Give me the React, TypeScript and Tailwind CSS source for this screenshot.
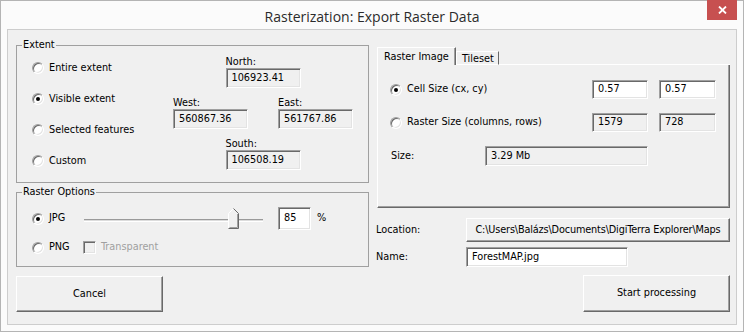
import React from "react";

const sunken =
  "border border-t-[#a0a0a0] border-l-[#a0a0a0] border-b-white border-r-white shadow-[inset_1px_1px_0_#696969,inset_-1px_-1px_0_#e3e3e3]";
const raised =
  "border border-t-white border-l-white border-b-[#696969] border-r-[#696969] shadow-[inset_-1px_-1px_0_#a0a0a0]";

function Radio({ checked }: { checked?: boolean }) {
  return (
    <span
      className={`flex h-3 w-3 shrink-0 items-center justify-center rounded-full bg-white ${sunken}`}
    >
      {checked && <span className="h-1 w-1 rounded-full bg-black" />}
    </span>
  );
}

function Box({ value, className }: { value: string; className: string }) {
  return (
    <div className={`flex shrink-0 items-center pl-[5px] ${sunken} ${className}`}>
      {value}
    </div>
  );
}

function Coord({ label, value }: { label: string; value: string }) {
  return (
    <div className="flex w-[75px] flex-col">
      <span className="h-[12px] leading-[12px]">{label}</span>
      <Box value={value} className="h-[20px] bg-[#f0f0f0]" />
    </div>
  );
}

function Slider() {
  return (
    <div className="relative flex h-[23px] w-[179px] shrink-0 items-center">
      <div className="mt-[3px] h-[3px] w-full border-t border-b border-t-[#9a9a9a] border-b-white bg-[#dcdcdc]" />
      <svg
        className="absolute left-[144px] top-[1px]"
        width="11"
        height="21"
        viewBox="0 0 11 21"
      >
        <path d="M0.5 20.5V5.5L5.5 0.5L10.5 5.5V20.5Z" fill="#f0f0f0" />
        <path d="M0.5 20V5.5L5.5 0.5" stroke="#ffffff" fill="none" />
        <path d="M5.5 0.5L10.5 5.5V20.5H0.5" stroke="#696969" fill="none" />
        <path d="M9.5 6V19.5H1.5" stroke="#a0a0a0" fill="none" />
      </svg>
    </div>
  );
}

export default function App() {
  const extentRows = [
    { label: "Entire extent" },
    { label: "Visible extent", checked: true },
    { label: "Selected features" },
    { label: "Custom" },
  ];

  return (
    <div className="flex h-[332px] w-[744px] flex-col border border-[#b4b4b4] bg-[#fbfbfb] font-['DejaVu_Sans_Condensed','Liberation_Sans',sans-serif] text-[10.8px] text-black">
      <div className="grid h-[28px] shrink-0 grid-cols-[1fr_auto_1fr]">
        <div />
        <div className="self-center pt-[3px] font-['Open_Sans',sans-serif] text-[14px] leading-none text-[#2b2b2b]">
          Rasterization: Export Raster Data
        </div>
        <div className="flex justify-end pr-[6px]">
          <div className="-mt-px flex h-[20px] w-[30px] items-center justify-center bg-[#c75050]">
            <svg width="9" height="8" viewBox="0 0 9 8">
              <path d="M1 0.5L8 7.5M8 0.5L1 7.5" stroke="#ffffff" strokeWidth="1.8" />
            </svg>
          </div>
        </div>
      </div>

      <div className="mx-[6px] mb-[6px] flex flex-1 border border-[#cdcdcd] bg-[#f0f0f0] pl-[8px]">
        {/* left column */}
        <div className="flex w-[353px] shrink-0 flex-col pt-[8px]">
          <fieldset className="h-[145px] border border-[#a0a0a0]">
            <legend className="ml-[5px] px-[1px] leading-[14px]">Extent</legend>
            <div className="flex pl-[15px] pt-[4px]">
              <div className="mt-[2px] flex w-[141px] shrink-0 flex-col gap-[11px]">
                {extentRows.map((r) => (
                  <div key={r.label} className="flex h-[20px] items-center gap-[5px]">
                    <Radio checked={r.checked} />
                    <span>{r.label}</span>
                  </div>
                ))}
              </div>
              <div className="flex w-[180px] flex-col gap-[9px]">
                <div className="flex justify-center">
                  <Coord label="North:" value="106923.41" />
                </div>
                <div className="flex justify-between">
                  <Coord label="West:" value="560867.36" />
                  <Coord label="East:" value="561767.86" />
                </div>
                <div className="flex justify-center">
                  <Coord label="South:" value="106508.19" />
                </div>
              </div>
            </div>
          </fieldset>

          <fieldset className="mt-[2px] h-[82px] border border-[#a0a0a0]">
            <legend className="ml-[5px] px-[1px] leading-[14px]">Raster Options</legend>
            <div className="flex flex-col gap-[6px] pl-[15px] pt-[8px]">
              <div className="flex h-[23px] items-center">
                <Radio checked />
                <span className="ml-[5px] w-[35px]">JPG</span>
                <Slider />
                <Box value="85" className="ml-[15px] h-[23px] w-[33px] bg-white" />
                <span className="ml-[6px]">%</span>
              </div>
              <div className="flex h-[23px] items-center">
                <Radio />
                <span className="ml-[5px] w-[34px]">PNG</span>
                <span className={`h-[13px] w-[13px] shrink-0 bg-[#f0f0f0] ${sunken}`} />
                <span className="ml-[5px] text-[#a0a0a0]">Transparent</span>
              </div>
            </div>
          </fieldset>

          <button className={`mt-[9px] h-[36px] w-[147px] bg-[#f0f0f0] ${raised}`}>
            Cancel
          </button>
        </div>

        {/* right column */}
        <div className="ml-[8px] flex w-[353px] shrink-0 flex-col pt-[17px]">
          <div className="flex items-end">
            <div className="h-[18px] w-[79px] border-t border-l border-r border-t-white border-l-white border-r-[#696969] pl-[6px] pt-[2px] leading-[14px] shadow-[inset_-1px_0_0_#a0a0a0]">
              Raster Image
            </div>
            <div className="h-[14px] w-[43px] border border-t-white border-l-white border-b-white border-r-[#696969] pl-[5px] leading-[14px]">
              Tileset
            </div>
            <div className="h-px flex-1 bg-white" />
          </div>
          <div
            className={`flex h-[143px] flex-col gap-[14px] border-l border-r border-b border-l-white border-r-[#696969] border-b-[#696969] pl-[12px] pr-[13px] pt-[15px] shadow-[inset_-1px_-1px_0_#a0a0a0]`}
          >
            <div className="flex h-[19px] items-center">
              <Radio checked />
              <span className="ml-[5px] flex-1">Cell Size (cx, cy)</span>
              <Box value="0.57" className="h-[19px] w-[56px] bg-white" />
              <Box value="0.57" className="ml-[11px] h-[19px] w-[57px] bg-white" />
            </div>
            <div className="flex h-[19px] items-center">
              <Radio />
              <span className="ml-[5px] flex-1">Raster Size (columns, rows)</span>
              <Box value="1579" className="h-[19px] w-[56px] bg-[#f0f0f0]" />
              <Box value="728" className="ml-[11px] h-[19px] w-[57px] bg-[#f0f0f0]" />
            </div>
            <div className="flex h-[20px] items-center">
              <span className="ml-[1px] w-[94px]">Size:</span>
              <Box value="3.29 Mb" className="h-[20px] w-[163px] bg-[#f0f0f0]" />
            </div>
          </div>

          <div className="mt-[10px] flex h-[24px] items-center">
            <span className="-ml-px w-[90px]">Location:</span>
            <button
              className={`h-[24px] w-[264px] overflow-hidden whitespace-nowrap bg-[#f0f0f0] tracking-[-0.15px] ${raised}`}
            >
              C:\Users\Balázs\Documents\DigiTerra Explorer\Maps
            </button>
          </div>
          <div className="mt-[5px] flex h-[20px] items-center">
            <span className="-ml-px w-[90px]">Name:</span>
            <Box value="ForestMAP.jpg" className="h-[20px] w-[162px] bg-white" />
          </div>
          <button
            className={`ml-auto mt-[8px] h-[37px] w-[147px] bg-[#f0f0f0] ${raised}`}
          >
            Start processing
          </button>
        </div>
      </div>
    </div>
  );
}
